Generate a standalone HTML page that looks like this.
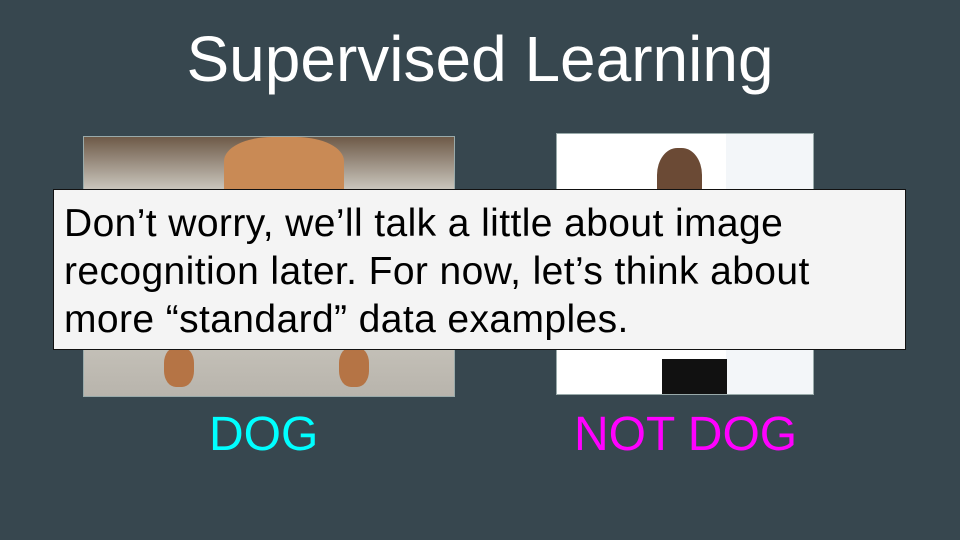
<!DOCTYPE html>
<html><head><style>
body{margin:0;width:960px;height:540px;background:#37474f;position:relative;overflow:hidden;font-family:"Liberation Sans",Arial,sans-serif}
.t{position:absolute;left:0;width:960px;text-align:center;top:23px;font-size:64px;color:#fff;line-height:72px}
.dog{position:absolute;left:83px;top:136px;width:370px;height:259px;border:1px solid #9aa;background:linear-gradient(180deg,#6e5a48 0%,#c9c5bc 20%,#d0cdc4 60%,#b8b4ac 100%);overflow:hidden}
.ear1{position:absolute;left:140px;top:0;width:120px;height:60px;background:#c98a55;border-radius:40% 40% 0 0}
.paw{position:absolute;top:210px;width:30px;height:40px;background:#b57445;border-radius:40%}
.man{position:absolute;left:556px;top:133px;width:256px;height:260px;border:1px solid #9aa;background:linear-gradient(90deg,#fff 0,#fff 66%,#f3f6f9 66%)}
.head{position:absolute;left:100px;top:14px;width:45px;height:60px;background:#6b4a35;border-radius:45% 45% 30% 30%}
.suit{position:absolute;left:105px;top:225px;width:65px;height:35px;background:#111}
.box{position:absolute;left:53px;top:189px;width:853px;height:161px;background:#f4f4f4;border:1px solid #111;box-sizing:border-box;padding:10px 0 0 10px;font-size:39px;letter-spacing:0.4px;line-height:48px;color:#000;white-space:nowrap}
.l{position:absolute;font-size:48px;top:407px;line-height:56px}
</style></head><body>
<div class="t">Supervised Learning</div>
<div class="dog"><div class="ear1"></div><div class="paw" style="left:80px"></div><div class="paw" style="left:255px"></div></div>
<div class="man"><div class="head"></div><div class="suit"></div></div>
<div class="box">Don’t worry, we’ll talk a little about image<br>recognition later. For now, let’s think about<br>more “standard” data examples.</div>
<div class="l" style="left:209px;color:#00ffff">DOG</div>
<div class="l" style="left:574px;color:#ff00ff">NOT DOG</div>
</body></html>
